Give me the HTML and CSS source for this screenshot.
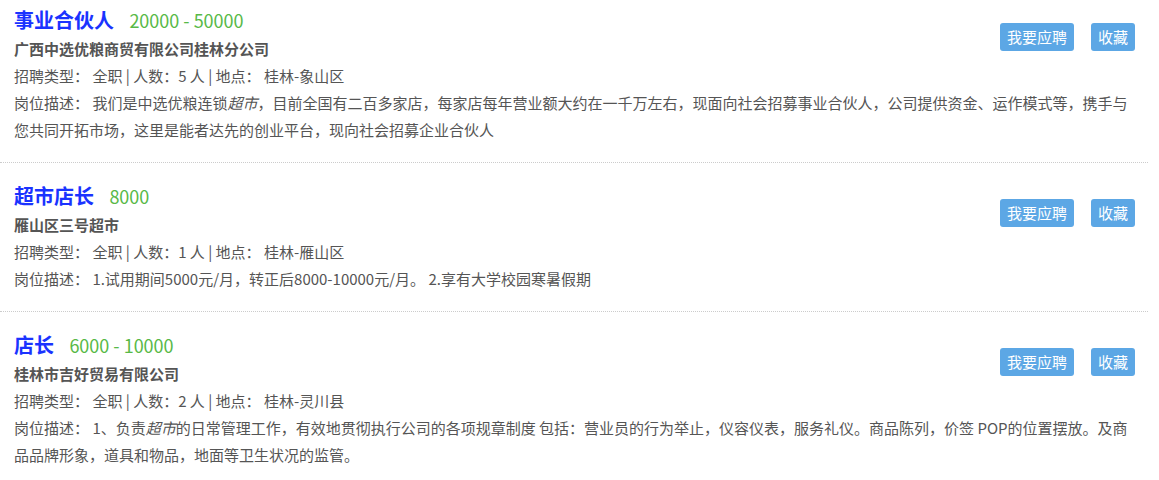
FILE: index.html
```html
<!DOCTYPE html>
<html lang="zh-CN">
<head>
  <meta charset="UTF-8" />
  <meta name="viewport" content="width=device-width, initial-scale=1.0" />
  <title>招聘信息</title>
  <link rel="stylesheet" href="styles.css">
</head>
<body>
  <div class="job-list">
    <div class="job">
      <div class="actions">
        <button class="btn">我要应聘</button>
        <button class="btn">收藏</button>
      </div>
      <div class="job-title">
        <a class="name">事业合伙人</a>
        <span class="salary">20000 - 50000</span>
      </div>
      <div class="company">广西中选优粮商贸有限公司桂林分公司</div>
      <div class="meta"><span class="label">招聘类型：</span> 全职 | 人数：5 人 | 地点： 桂林-象山区</div>
      <div class="desc"><span class="label">岗位描述：</span> 我们是中选优粮连锁<em>超市</em>，目前全国有二百多家店，每家店每年营业额大约在一千万左右，现面向社会招募事业合伙人，公司提供资金、运作模式等，携手与您共同开拓市场，这里是能者达先的创业平台，现向社会招募企业合伙人</div>
    </div>

    <div class="job">
      <div class="actions">
        <button class="btn">我要应聘</button>
        <button class="btn">收藏</button>
      </div>
      <div class="job-title">
        <a class="name">超市店长</a>
        <span class="salary">8000</span>
      </div>
      <div class="company">雁山区三号超市</div>
      <div class="meta"><span class="label">招聘类型：</span> 全职 | 人数：1 人 | 地点： 桂林-雁山区</div>
      <div class="desc"><span class="label">岗位描述：</span> 1.试用期间5000元/月，转正后8000-10000元/月。 2.享有大学校园寒暑假期</div>
    </div>

    <div class="job">
      <div class="actions">
        <button class="btn">我要应聘</button>
        <button class="btn">收藏</button>
      </div>
      <div class="job-title">
        <a class="name">店长</a>
        <span class="salary">6000 - 10000</span>
      </div>
      <div class="company">桂林市吉好贸易有限公司</div>
      <div class="meta"><span class="label">招聘类型：</span> 全职 | 人数：2 人 | 地点： 桂林-灵川县</div>
      <div class="desc"><span class="label">岗位描述：</span> 1、负责<em>超市</em>的日常管理工作，有效地贯彻执行公司的各项规章制度 包括：营业员的行为举止，仪容仪表，服务礼仪。商品陈列，价签 POP的位置摆放。及商品品牌形象，道具和物品，地面等卫生状况的监管。</div>
    </div>
  </div>
</body>
</html>
```

FILE: styles.css
```css
body {
  margin: 0;
  font-family: "Noto Sans CJK SC", "Noto Sans", sans-serif;
  font-size: 15px;
  color: #555;
  background: #fff;
}
.job-list {
  width: 1148px;
}
.job {
  padding: 18px 13px 19px 14px;
  border-bottom: 1px dotted #ccc;
}
.job:first-child {
  padding-top: 5px;
}
.job:last-child {
  border-bottom: none;
}
.actions {
  float: right;
  display: flex;
  gap: 17px;
  margin-top: 18px;
}
.btn {
  height: 28px;
  padding: 0 7px;
  border: none;
  border-radius: 3px;
  background: #5ca7e5;
  color: #fff;
  font-family: inherit;
  font-size: 15px;
  line-height: 28px;
  cursor: pointer;
}
.job-title {
  height: 30px;
  line-height: 30px;
}
.name, .salary {
  display: inline-block;
  vertical-align: top;
  line-height: 30px;
}
.name {
  font-size: 20px;
  font-weight: bold;
  color: #1a33ff;
  cursor: pointer;
}
.salary {
  margin-left: 12px;
  font-size: 18px;
  color: #58b947;
}
.company {
  font-weight: bold;
  line-height: 27px;
}
.meta, .desc {
  line-height: 27px;
}
```
